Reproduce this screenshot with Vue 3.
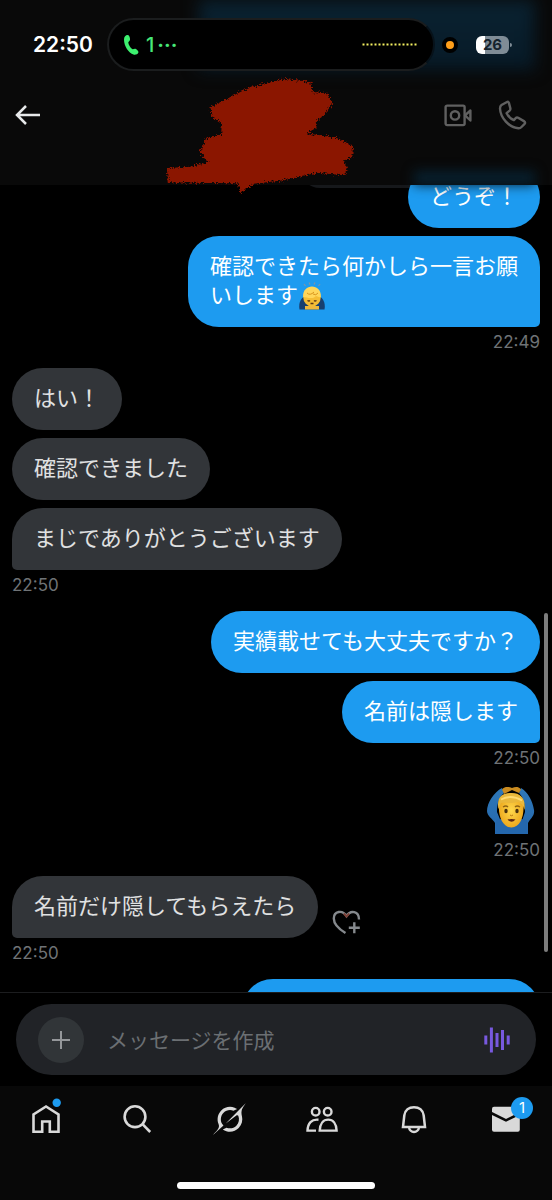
<script setup>
import { ref } from 'vue'

const draft = ref('')

const messages = [
  { id: 1, side: 'out', text: 'どうぞ！', quoted: true },
  { id: 2, side: 'out', text: '確認できたら何かしら一言お願いします', bow: true, time: '22:49' },
  { id: 3, side: 'in', text: 'はい！' },
  { id: 4, side: 'in', text: '確認できました' },
  { id: 5, side: 'in', text: 'まじでありがとうございます', time: '22:50' },
  { id: 6, side: 'out', text: '実績載せても大丈夫ですか？' },
  { id: 7, side: 'out', text: '名前は隠します', time: '22:50' },
  { id: 8, side: 'out', sticker: true, time: '22:50' },
  { id: 9, side: 'in', text: '名前だけ隠してもらえたら', react: true, time: '22:50' },
  { id: 10, side: 'out', text: '', pending: true }
]
</script>

<template>
  <div class="screen">
    <header class="top">
      <div class="glow glow-status"></div>
      <div class="glow glow-feed"></div>

      <div class="status">
        <time class="clock">22:50</time>
        <div class="island">
          <svg class="call" viewBox="0 0 16 22" aria-hidden="true">
            <path d="M1 5.500C1 2.500 3 .8 5 1.100C6.300 1.300 7.300 4.500 7 6C6.700 7.400 5.200 7.400 5.300 8.700C5.600 11 7.500 13.800 9.300 15.100C10.300 15.800 11.200 14.300 12.500 14.800C14 15.400 15.800 17.300 15.400 18.500C14.800 20.200 12.500 21.200 10.500 20.600C5.500 19 1 12 1 5.500Z" fill="#3df06f" />
          </svg>
          <span class="caller">1<span class="more">···</span></span>
          <svg class="levels" viewBox="0 0 55 3" aria-hidden="true">
            <path d="M.5 1.500H55" stroke="#f4f060" stroke-width="2" stroke-dasharray="2 2" />
          </svg>
        </div>
        <span class="mic"></span>
        <div class="battery"><span>26</span></div>
      </div>

      <nav class="bar">
        <button class="icon back" aria-label="戻る">
          <svg viewBox="0 0 26 22"><path d="M11 2L2 11L11 20M2 11H25" fill="none" stroke="#e7e9ea" stroke-width="2.500" /></svg>
        </button>
        <button class="icon video" aria-label="ビデオ通話">
          <svg viewBox="0 0 28 24">
            <g fill="none" stroke="#606060" stroke-width="2.400">
              <rect x="1.600" y="2.600" width="19" height="19.500" rx="1.500" />
              <circle cx="11" cy="12.400" r="4.200" />
              <path d="M21 12.400L26.400 7.500V17.500Z" stroke-linejoin="round" />
            </g>
          </svg>
        </button>
        <button class="icon phone" aria-label="音声通話">
          <svg viewBox="0 0 30 30">
            <path d="M9 2L3.500 5Q2 6 2 8.500C2.500 18 11 27.500 20.500 28.200Q22.200 28.300 23.500 27L26.600 23.800Q27.600 22.500 26.300 21.400L20.200 17.700Q18.800 17 17.600 18.200L15.900 20.100C12.600 18.700 10 16 8.600 13.200L11.600 10.600Q12.700 9.600 12.300 8.200L10.900 2.900Q10.300 1.300 9 2Z" fill="none" stroke="#606060" stroke-width="2.400" stroke-linejoin="round" />
          </svg>
        </button>
      </nav>

      <svg class="scribble" viewBox="0 0 660 390" aria-hidden="true">
        <defs>
          <filter id="rough" x="-5%" y="-5%" width="110%" height="110%">
            <feTurbulence type="fractalNoise" baseFrequency=".2" numOctaves="3" seed="4" />
            <feDisplacementMap in="SourceGraphic" scale="20" xChannelSelector="R" yChannelSelector="G" />
          </filter>
        </defs>
        <path filter="url(#rough)" fill="#8b1500" d="M54 294L124 290L180 277L152 245L172 204L216 194L219 160L188 142L184 112L234 86L304 51L354 40L399 26L484 35L488 66L534 69L550 99L526 134L504 152L502 174L472 190L564 204L612 228L610 260L584 272L594 294L586 316L504 308L404 331L314 341L274 370L266 340L179 339L56 337Z" />
      </svg>
    </header>

    <main class="feed">
      <ol class="list">
        <li v-for="m in messages" :key="m.id" :class="['msg', m.side, { timed: m.time, quoted: m.quoted }]">
          <div class="row">
            <svg v-if="m.sticker" class="sticker" viewBox="0 0 48 49" role="img" aria-label="🙆‍♂️">
              <defs>
                <linearGradient id="sleeve" x1="0" y1="0" x2="0" y2="1">
                  <stop offset="0" stop-color="#2f78b8" /><stop offset="1" stop-color="#2467ad" />
                </linearGradient>
                <radialGradient id="skin"><stop offset="0" stop-color="#ffd84c" /><stop offset="1" stop-color="#eda91f" /></radialGradient>
              </defs>
              <path d="M15 2C7 6 0 17 0 25C0 30 6 33 8 37V48H41V37C43 33 48 30 47 24C46 16 41 6 34 2L32 7C37 12 38 19 38 26L34 38H15L10 26C10 18 12 11 17 7Z" fill="url(#sleeve)" />
              <path d="M9 34L14 33H34L40 34V48H9Z" fill="#2467ad" />
              <path d="M15 3.500C18 0 22 1 25 2C28 1 31 0 34 3.500L32 7L25 4L17 8Z" fill="#c98b20" />
              <path d="M12 18C11 9 17 7.500 24.500 7.500S37 11 36.500 20C37 31 33 41.500 24.500 41.500S11 31 12 18Z" fill="url(#skin)" />
              <path d="M11.500 23C9 11 16 7 24.500 7C34 7 39 13 37.500 24C36.500 19 34 16.500 30 16C24 18 17 16 14 17Z" fill="#e9b83b" />
              <path d="M14 13.500Q24 8 35 14.500" fill="none" stroke="#ffda70" stroke-width="1.800" />
              <ellipse cx="19" cy="25" rx="1.700" ry="2.200" fill="#49300e" /><ellipse cx="30" cy="25" rx="1.700" ry="2.200" fill="#49300e" />
              <path d="M16 21Q19 19 21 21M28 21Q30 19 33 21" fill="none" stroke="#8f6312" stroke-width="1.300" />
              <path d="M23 29Q24.500 30.500 26 29" fill="none" stroke="#b97811" />
              <path d="M20.500 33.500Q24.500 32.500 28.500 33.500Q24.500 38 20.500 33.500" fill="#5c2512" />
            </svg>
            <p v-else :class="['bubble', { pending: m.pending }]">{{ m.text }}<svg v-if="m.bow" class="bow" viewBox="0 0 28 28" role="img" aria-label="🙇‍♂️">
              <path d="M6 2L7.500 4M11 .5L12 2.500M17 .5L16 2.500M22 2L20.500 4" stroke="#7f95a8" stroke-width="1.200" />
              <path d="M1.500 27.500C0 20 4 14 9 14H19C24 14 28 20 26.500 27.500Z" fill="#173f70" />
              <path d="M7 24H21V27.500H7Z" fill="#efb83b" />
              <ellipse cx="14" cy="15" rx="8.800" ry="9.500" fill="#f5bd35" />
              <path d="M5.200 15C4 1 24 1 22.800 15C21 16 20 14 18 14C14 18 9 15 5.200 15Z" fill="#ffd65a" />
              <path d="M9 11Q12 14 16 10M15 12Q18 14 20 11" fill="none" stroke="#d9951e" />
              <path d="M9.500 18.500Q11 19.500 12 18.500M16 18.500Q17 19.500 18.500 18.500M12.500 21.500H15.500" fill="none" stroke="#593715" stroke-width="1.300" />
            </svg></p>
            <button v-if="m.react" class="icon react" aria-label="リアクションを追加">
              <svg viewBox="0 0 30 28">
                <g fill="none" stroke="#85898d" stroke-width="2.400">
                  <path d="M14.500 25C7 20.500 2.800 15.500 2.800 10.500C2.800 3 11.500 1.500 15.500 8C19.500 1.500 28 3 28 11.500" />
                  <path d="M23.300 14.200V25.200M17.800 19.700H28.800" />
                </g>
                <path d="M12.800 5.500L15.500 8.500L18.200 5.500" fill="none" stroke="#7c4037" stroke-width="2" />
              </svg>
            </button>
          </div>
          <time v-if="m.time" class="stamp">{{ m.time }}</time>
        </li>
      </ol>
      <span class="thumb"></span>
    </main>

    <form class="composer" @submit.prevent>
      <div class="field">
        <button type="button" class="add" aria-label="添付">
          <svg viewBox="0 0 20 20"><path d="M10 1V19M1 10H19" stroke="#94979a" stroke-width="2" /></svg>
        </button>
        <input v-model="draft" type="text" placeholder="メッセージを作成" aria-label="メッセージを作成">
        <button type="button" class="icon voice" aria-label="音声メッセージ">
          <svg viewBox="0 0 26 26">
            <path d="M1.800 8.500V17.500M7.400 .5V25.500M13 6V20M18.500 3V23M24.200 8.500V17.500" stroke="#7859df" stroke-width="3" />
          </svg>
        </button>
      </div>
    </form>

    <footer class="bottom">
      <nav class="tabs">
        <a href="#home" aria-label="ホーム">
          <svg viewBox="0 0 36 36">
            <path d="M18 5.500L5.500 13.500V30.800H14.200V20.500H21.800V30.800H30.500V13.500Z" fill="none" stroke="#d9d9d9" stroke-width="2.600" />
            <circle cx="28.700" cy="1.800" r="4.200" fill="#1d9bf0" />
          </svg>
        </a>
        <a href="#search" aria-label="検索">
          <svg viewBox="0 0 36 36">
            <g fill="none" stroke="#d9d9d9" stroke-width="2.600"><circle cx="15" cy="15.700" r="10.400" /><path d="M22.500 23.200L30.200 31" /></g>
          </svg>
        </a>
        <a href="#grok" aria-label="Grok">
          <svg viewBox="0 0 36 36">
            <path transform="translate(1 2)" fill="#d9d9d9" d="M12.745 20.540l10.970-8.190c.539-.4 1.307-.244 1.564.38 1.349 3.288.746 7.241-1.938 9.955-2.683 2.714-6.417 3.310-9.830 1.954l-3.728 1.745c5.347 3.697 11.840 2.782 15.898-1.324 3.219-3.255 4.216-7.692 3.284-11.693l.008.009c-1.351-5.878.332-8.227 3.782-13.031L33 0l-4.540 4.590v-.014L12.743 20.544M10.480 22.531c-3.837-3.707-3.175-9.446.1-12.755 2.420-2.449 6.388-3.448 9.852-1.979l3.720-1.737c-.67-.49-1.530-1.017-2.515-1.387-4.455-1.854-9.789-.931-13.410 2.728-3.483 3.523-4.579 8.940-2.697 13.561 1.405 3.454-.899 5.898-3.220 8.364C1.490 30.200.666 31.074 0 32l10.478-9.466" />
          </svg>
        </a>
        <a href="#communities" aria-label="コミュニティ">
          <svg viewBox="0 0 36 36">
            <g fill="none" stroke="#d9d9d9" stroke-width="2.400">
              <circle cx="11.700" cy="10.700" r="3.800" /><circle cx="23.700" cy="10.700" r="3.800" />
              <path d="M15.700 29.600H32.600C32.300 22.500 29 18.600 24.200 18.600S16 22.500 15.700 29.600Z" />
              <path d="M12 29.600H3.500C3.800 22 7.500 18 14.500 18.700" />
            </g>
          </svg>
        </a>
        <a href="#notifications" aria-label="通知">
          <svg viewBox="0 0 36 36">
            <g fill="none" stroke="#d9d9d9" stroke-width="2.500">
              <path d="M7 26L8.300 14.500C9 9 13 6.200 18 6.200S27 9 27.700 14.500L29 26Z" />
              <path d="M13 26C13.500 32.500 22.500 32.500 23 26" />
            </g>
          </svg>
        </a>
        <a href="#messages" aria-label="メッセージ">
          <svg viewBox="0 0 36 36">
            <rect x="4" y="5.700" width="27.800" height="25" rx="2" fill="#d9d9d9" />
            <path d="M3 12L18 19.300L33 12" fill="none" stroke="#080808" stroke-width="2.600" />
          </svg>
          <span class="badge">1</span>
        </a>
      </nav>
      <span class="home-indicator"></span>
    </footer>
  </div>
</template>

<style>
body {
  background: #000;
}
</style>

<style scoped>
.screen {
  display: flex;
  flex-direction: column;
  height: 100vh;
  overflow: hidden;
  background: #000;
  color: #fff;
  font-family: Inter, "Noto Sans CJK JP", sans-serif;
}

button {
  padding: 0;
  border: 0;
  background: none;
  cursor: pointer;
}

svg {
  display: block;
}

.top {
  position: relative;
  z-index: 1;
  flex: none;
  padding-bottom: 40px;
  background: #090909;
}

.glow {
  position: absolute;
}

.glow-status {
  top: 0;
  left: 36%;
  right: 3%;
  height: 70px;
  background: linear-gradient(#0a2231, #071a27);
  filter: blur(8px);
}

.glow-feed {
  left: 75%;
  right: 3%;
  bottom: 0;
  height: 14px;
  background: #07202f;
  filter: blur(6px);
}

.status {
  position: relative;
  display: flex;
  align-items: center;
  padding: 18px 43px 0 33px;
}

.clock {
  width: 74px;
  font-size: 21px;
  font-weight: 600;
  line-height: 28px;
}

.island {
  display: flex;
  flex: 1;
  align-items: center;
  box-sizing: border-box;
  height: 53px;
  padding: 0 16px 0 14px;
  border: 2px solid #1b1d1e;
  border-right-color: #07121a;
  border-radius: 27px;
  background: #000;
}

.call {
  width: 16px;
  height: 22px;
}

.caller {
  display: flex;
  flex: 1;
  margin-left: 7px;
  color: #46e878;
  font-size: 20px;
  font-weight: 500;
  line-height: 24px;
}

.more {
  margin-left: 3px;
  font-weight: 700;
}

.levels {
  width: 55px;
  height: 3px;
}

.mic {
  box-sizing: border-box;
  width: 16px;
  height: 16px;
  margin: 0 18px 0 7px;
  border: 4px solid #000;
  border-radius: 50%;
  background: #ff9f1a;
}

.battery {
  position: relative;
  width: 33px;
  border-radius: 6px;
  background: linear-gradient(90deg, #fff 27%, #7f8c96 27%);
  color: #15232d;
  font-size: 15px;
  font-weight: 700;
  line-height: 18px;
  text-align: center;
}

.battery::after {
  position: absolute;
  top: 7px;
  right: -3px;
  width: 2px;
  height: 4px;
  border-radius: 0 2px 2px 0;
  background: #7f8c96;
  content: "";
}

.bar {
  display: flex;
  align-items: center;
  height: 30px;
  padding: 29px 24px 15px 15px;
}

.icon svg {
  width: 100%;
}

.back {
  width: 26px;
  margin-right: auto;
}

.video {
  width: 28px;
  margin-right: 26px;
}

.phone {
  width: 30px;
}

.scribble {
  position: absolute;
  top: 70px;
  left: 27%;
  width: 220px;
  height: 130px;
}

.feed {
  position: relative;
  flex: 1;
  min-height: 0;
  overflow: hidden;
}

/* The list is scrolled so that its first bubble runs under the header. */
.list {
  margin: -19px 0 0;
  padding: 0 12px;
  list-style: none;
}

.msg {
  display: flex;
  flex-direction: column;
  align-items: flex-start;
  margin-bottom: 8px;
}

.msg.out {
  align-items: flex-end;
}

.msg.timed {
  margin-bottom: 15px;
}

.row {
  position: relative;
  display: flex;
  align-items: flex-end;
}

.quoted .row::before {
  position: absolute;
  right: 30px;
  bottom: 40px;
  width: 210px;
  height: 40px;
  border-radius: 30px;
  background: #16181b;
  content: "";
}

.bubble {
  position: relative;
  box-sizing: border-box;
  max-width: 352px;
  margin: 0;
  padding: 14px 22px 19px;
  border-radius: 31px;
  background: #323539;
  color: #e0e1e2;
  font-family: "Noto Sans CJK JP", sans-serif;
  font-size: 22px;
  line-height: 29px;
}

.bubble.pending {
  width: 298px;
  height: 62px;
}

.out .bubble {
  background: #1d9bf0;
  color: #fff;
}

.in.timed .bubble {
  border-bottom-left-radius: 5px;
}

.out.timed .bubble {
  border-bottom-right-radius: 5px;
}

.bow {
  display: inline-block;
  width: 28px;
  height: 28px;
  vertical-align: -3px;
  margin: -4px 0;
}

.sticker {
  width: 48px;
  height: 49px;
  margin: 2px 5px 0 0;
}

.react {
  width: 30px;
  margin: 0 0 2px 13px;
}

.stamp {
  margin-top: 4px;
  color: #6f7376;
  font-size: 17px;
  line-height: 22px;
}

.thumb {
  position: absolute;
  top: 53%;
  right: 4px;
  width: 4px;
  height: 42%;
  border-radius: 2px;
  background: #7d7d7d;
}

.composer {
  flex: none;
  padding: 11px 16px;
  border-top: 1px solid #1c1d1f;
}

.field {
  display: flex;
  align-items: center;
  height: 71px;
  padding: 0 26px 0 22px;
  border-radius: 36px;
  background: #212327;
}

.add {
  display: grid;
  width: 46px;
  height: 46px;
  place-items: center;
  border-radius: 50%;
  background: #313538;
}

.add svg {
  width: 20px;
}

input {
  flex: 1;
  min-width: 0;
  margin: 0 16px 0 23px;
  padding: 0 0 2px;
  border: 0;
  outline: 0;
  background: none;
  color: #e7e9ea;
  font-family: "Noto Sans CJK JP", sans-serif;
  font-size: 21px;
  line-height: 30px;
}

input::placeholder {
  color: #6b6f73;
  opacity: 1;
}

.voice {
  width: 26px;
}

.bottom {
  flex: none;
  background: #080808;
}

.tabs {
  display: grid;
  grid-template-columns: repeat(6, 1fr);
  justify-items: center;
  padding: 15px 0 45px;
}

.tabs a {
  position: relative;
  color: #fff;
  text-decoration: none;
}

.tabs svg {
  width: 36px;
  height: 36px;
  overflow: visible;
}

.badge {
  position: absolute;
  top: -4px;
  right: -9px;
  width: 22px;
  border-radius: 50%;
  background: #1d9bf0;
  font-size: 15px;
  line-height: 22px;
  text-align: center;
}

.home-indicator {
  display: block;
  width: 36%;
  height: 7px;
  margin: 0 auto 11px;
  border-radius: 4px;
  background: #fff;
}
</style>
